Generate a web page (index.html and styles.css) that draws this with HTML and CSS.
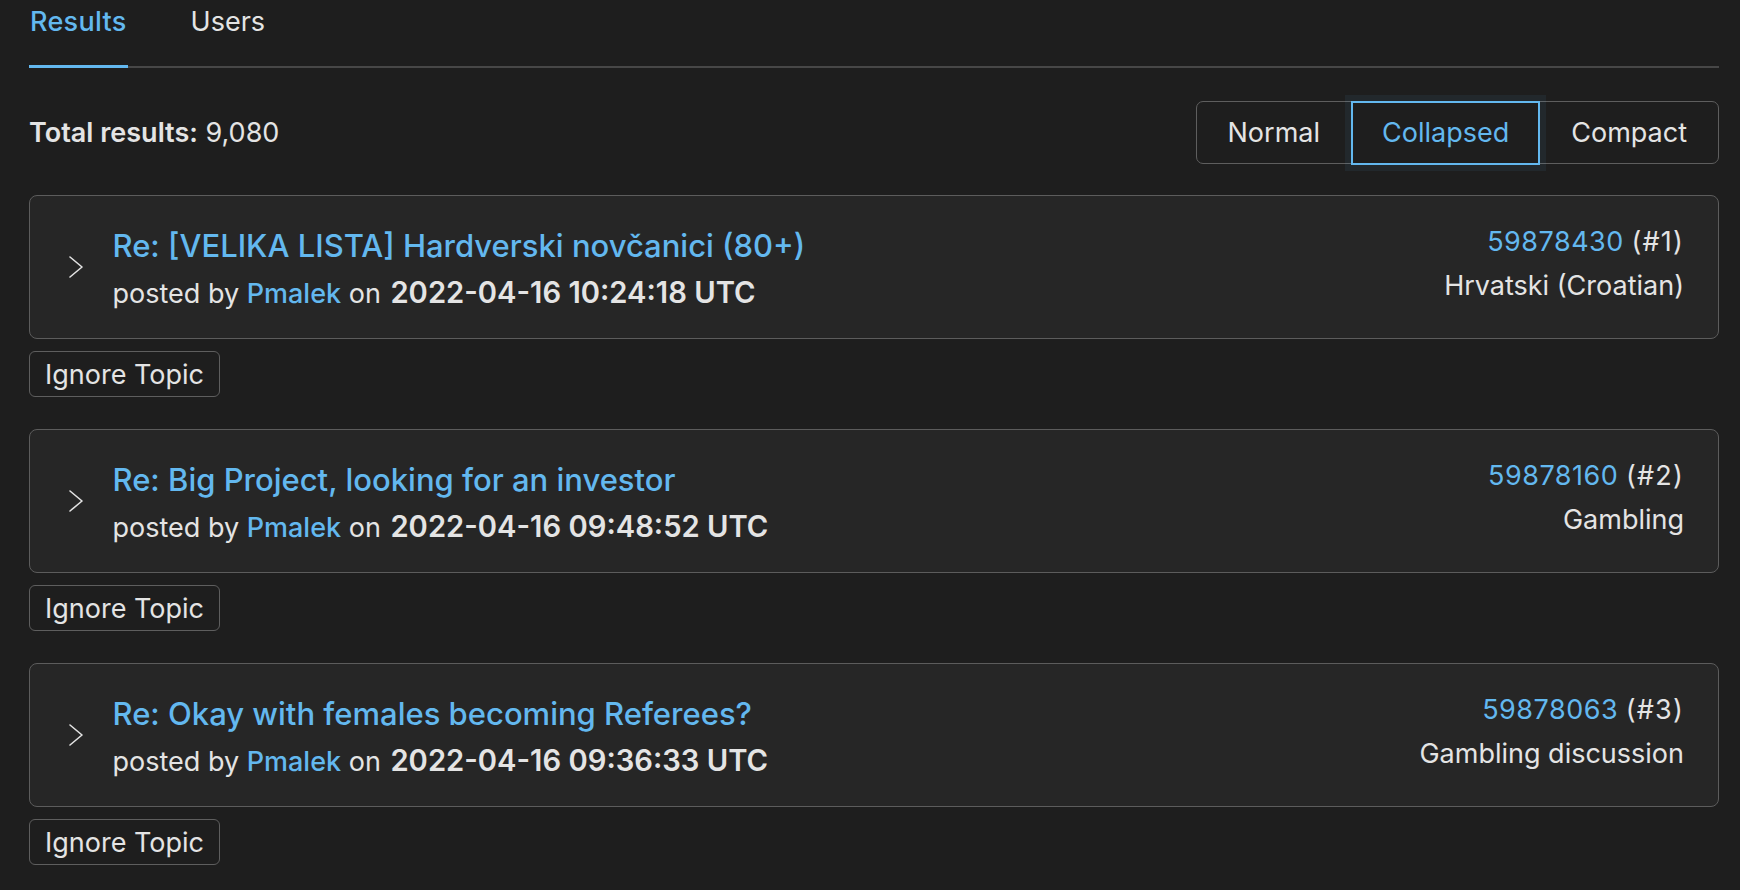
FILE: index.html
```html
<!DOCTYPE html>
<html lang="en">
<head>
<meta charset="utf-8">
<title>Search results</title>
<link rel="stylesheet" href="styles.css">
</head>
<body>
<div class="page">
  <nav class="tabs">
    <a class="tab active" href="#">Results</a>
    <a class="tab" href="#">Users</a>
  </nav>

  <div class="summary">
    <div class="total"><span class="total-label">Total results:</span> 9,080</div>
    <div class="toggle">
      <button class="toggle-btn" type="button">Normal</button>
      <button class="toggle-btn selected" type="button">Collapsed</button>
      <button class="toggle-btn" type="button">Compact</button>
    </div>
  </div>

  <ul class="results">
    <li class="item">
      <div class="card">
        <svg class="chevron" width="14" height="22" viewBox="0 0 14 22"><path d="M1 1 L13 11 L1 21" fill="none" stroke="#e2e2e2" stroke-width="1.6" stroke-linecap="round" stroke-linejoin="round"/></svg>
        <div class="main">
          <a class="title" href="#">Re: [VELIKA LISTA] Hardverski novčanici (80+)</a>
          <div class="meta">posted by <a class="user" href="#">Pmalek</a> on <span class="date">2022-04-16 10:24:18 UTC</span></div>
        </div>
        <div class="side">
          <div><a class="msgid" href="#">59878430</a> <span class="num">(#1)</span></div>
          <div>Hrvatski (Croatian)</div>
        </div>
      </div>
      <button class="ignore" type="button">Ignore Topic</button>
    </li>
    <li class="item">
      <div class="card">
        <svg class="chevron" width="14" height="22" viewBox="0 0 14 22"><path d="M1 1 L13 11 L1 21" fill="none" stroke="#e2e2e2" stroke-width="1.6" stroke-linecap="round" stroke-linejoin="round"/></svg>
        <div class="main">
          <a class="title" href="#">Re: Big Project, looking for an investor</a>
          <div class="meta">posted by <a class="user" href="#">Pmalek</a> on <span class="date">2022-04-16 09:48:52 UTC</span></div>
        </div>
        <div class="side">
          <div><a class="msgid" href="#">59878160</a> <span class="num">(#2)</span></div>
          <div>Gambling</div>
        </div>
      </div>
      <button class="ignore" type="button">Ignore Topic</button>
    </li>
    <li class="item">
      <div class="card">
        <svg class="chevron" width="14" height="22" viewBox="0 0 14 22"><path d="M1 1 L13 11 L1 21" fill="none" stroke="#e2e2e2" stroke-width="1.6" stroke-linecap="round" stroke-linejoin="round"/></svg>
        <div class="main">
          <a class="title" href="#">Re: Okay with females becoming Referees?</a>
          <div class="meta">posted by <a class="user" href="#">Pmalek</a> on <span class="date">2022-04-16 09:36:33 UTC</span></div>
        </div>
        <div class="side">
          <div><a class="msgid" href="#">59878063</a> <span class="num">(#3)</span></div>
          <div>Gambling discussion</div>
        </div>
      </div>
      <button class="ignore" type="button">Ignore Topic</button>
    </li>
  </ul>
</div>
</body>
</html>
```

FILE: styles.css
```css
* { box-sizing: border-box; }

html, body {
  margin: 0;
  padding: 0;
  background: #1e1e1e;
}

body {
  font-family: Inter, "Noto Sans", "Liberation Sans", sans-serif;
  font-size: 27px;
  color: #e4e4e4;
  overflow: hidden;
}

a { text-decoration: none; color: inherit; }

.page {
  padding: 0 21px 0 29px;
}

/* Tabs */
.tabs {
  display: flex;
  gap: 62px;
  border-bottom: 2px solid #474747;
}

.tab {
  display: block;
  line-height: 34px;
  padding: 5px 1px 26px;
  margin-bottom: -2px;
  border-bottom: 3px solid transparent;
  color: #e4e4e4;
}

.tab.active {
  color: #63b8ef;
  font-weight: 500;
  letter-spacing: 0.3px;
  border-bottom-color: #63b8ef;
}

/* Summary row */
.summary {
  display: flex;
  justify-content: space-between;
  align-items: center;
  margin: 33px 0 31px;
}

.total-label { font-weight: 600; }

.toggle {
  display: flex;
  height: 63px;
  border: 1.5px solid #5e5e5e;
  border-radius: 7px;
}

.toggle-btn {
  font: inherit;
  color: #e4e4e4;
  background: transparent;
  border: 2px solid transparent;
  padding: 0 29px;
  cursor: pointer;
}

.toggle-btn.selected {
  margin: -1.5px 0;
  color: #63b8ef;
  border-color: #63b8ef;
  background: #1e1e1e;
  box-shadow: 0 0 0 6px rgba(100, 180, 240, 0.07);
}

/* Results */
.results {
  list-style: none;
  margin: 0;
  padding: 0;
  display: flex;
  flex-direction: column;
  gap: 32px;
}

.item {
  display: flex;
  flex-direction: column;
  align-items: flex-start;
  gap: 12px;
}

.card {
  align-self: stretch;
  display: flex;
  align-items: flex-start;
  height: 144px;
  padding: 20px 34px 20px 38.5px;
  background: #262626;
  border: 1.5px solid #5c5c5c;
  border-radius: 8px;
}

.chevron {
  align-self: center;
  flex: none;
  margin-right: 30px;
}

.main {
  flex: 1;
  margin-top: 8px;
}

.title {
  display: block;
  font-size: 31px;
  line-height: 44px;
  color: #63b8ef;
  font-weight: 500;
}

.meta {
  color: #e4e4e4;
  line-height: 49px;
}

.user {
  color: #63b8ef;
  font-weight: 500;
}

.date {
  margin-left: 2px;
  font-size: 29.2px;
  font-weight: 600;
}

.side {
  margin-top: 4px;
  text-align: right;
  line-height: 44px;
}

.msgid {
  color: #63b8ef;
  letter-spacing: 0.5px;
}

.num { letter-spacing: 1.2px; }

.ignore {
  font: inherit;
  color: #e4e4e4;
  background: #1e1e1e;
  height: 46px;
  line-height: 43px;
  padding: 0 15px;
  border: 1.5px solid #5e5e5e;
  border-radius: 6px;
  cursor: pointer;
}
```
